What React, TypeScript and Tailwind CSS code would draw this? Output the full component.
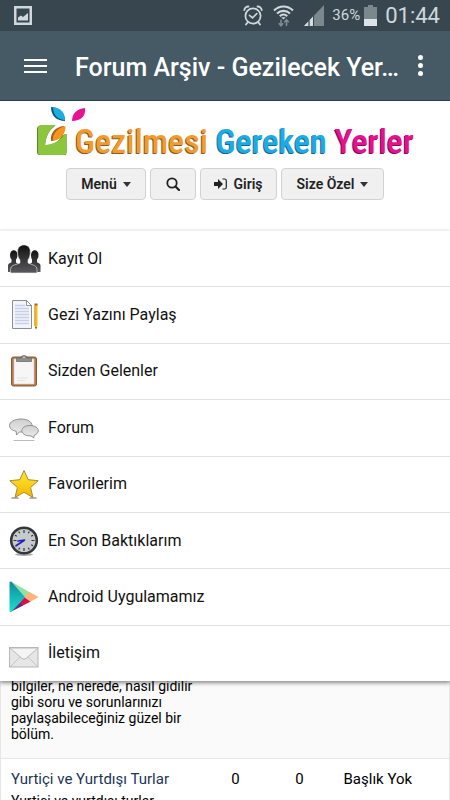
import React from "react";

function PictureIcon() {
  return (
    <svg width="18" height="19" viewBox="0 0 18 19" aria-hidden="true">
      <path d="M0 0h18v19H0z M2.500 2.500v14h13v-14z" fill="#cfd8dc" fillRule="evenodd" />
      <path d="M4 14.500v-3l3-2 2 1.500 5-4v7.500z" fill="#cfd8dc" />
    </svg>
  );
}

function AlarmIcon() {
  return (
    <svg width="20" height="21" viewBox="0 0 20 21" fill="none" stroke="#cfd8dc" strokeLinecap="round" aria-hidden="true">
      <circle cx="10" cy="11" r="7.600" strokeWidth="1.700" />
      <path d="M1.300 5.200C1.500 3 3.500 1.400 5.500 1.500M18.700 5.200C18.500 3 16.500 1.400 14.500 1.500" strokeWidth="1.800" />
      <path d="M4.500 17.500L3 19.500M15.500 17.500l1.500 2" strokeWidth="1.800" />
      <path d="M6.500 10.300l3 2.600 4.300-4.300" strokeWidth="1.600" />
    </svg>
  );
}

function WifiIcon() {
  return (
    <svg width="21" height="22" viewBox="0 0 21 22" fill="none" aria-hidden="true">
      <g stroke="#cfd8dc" strokeWidth="2.100">
        <path d="M1 5.600C6.500.2 14.500.2 20 5.600" />
        <path d="M4 8.600c3.800-3.700 9.200-3.700 13 0" />
        <path d="M6.800 11.300c2.200-2.200 5.200-2.200 7.400 0" />
      </g>
      <path d="M8.300 12.300h4.400l-2.200 2.200z" fill="#cfd8dc" />
      <path d="M8 14.500v6M5.800 18.300L8 20.800l2.200-2.500M13.500 21v-6M11.300 17.200l2.200-2.500 2.200 2.500" stroke="#7f8d94" strokeWidth="1.500" />
    </svg>
  );
}

function SignalIcon() {
  return (
    <svg width="20" height="21" viewBox="0 0 20 21" aria-hidden="true">
      <path d="M0 21L20 0v21z" fill="#7b888e" />
      <path d="M0 21L4.500 16.300V21zM5.500 21v-5.800L9 11.500V21z" fill="#d5dde0" />
      <path d="M4.500 16v5h1v-6zM9 11.500V21h1V10.500z" fill="#38474f" />
    </svg>
  );
}

function BatteryIcon() {
  return (
    <svg width="13" height="21" viewBox="0 0 13 21" aria-hidden="true">
      <path d="M4 0h5v2h4v19H0V2h4z" fill="#7b888e" />
      <path d="M0 14h13v7H0z" fill="#dde4e7" />
    </svg>
  );
}

function LogoMark() {
  return (
    <svg width="50" height="50" viewBox="0 0 50 50" className="shrink-0" aria-hidden="true">
      <path d="M3 19h15c-7 5-9 11-10 20 8-1 15-5 17-11h4v20H3q-3 0-3-3V22q0-3 3-3z" fill="#5e7f31" />
      <path d="M4 18h15c-7 4-10 11-11 20 9-1 17-5 19-11h3v18q0 3-3 3H4q-3 0-3-3V21q0-3 3-3z" fill="#8cc63f" />
      <path d="M27 19c1 9-4 14-13 15-1-8 4-14 13-15z" fill="#a65d17" />
      <path d="M28.500 19c0 8-4 13-12.500 15-1-7 4-13 12.500-15z" fill="#f7931e" />
      <path d="M14 0c9 1 14 6 14 14-8 0-14-5-14-14z" fill="#12536f" />
      <path d="M16 0c8 1 12 6 12 13-7 0-12-5-12-13z" fill="#1bace4" />
      <path d="M48 1c1 8-4 13-13 13 0-8 5-12 13-13z" fill="#e6148f" />
    </svg>
  );
}

function PeopleIcon() {
  return (
    <svg width="34" height="32" viewBox="0 0 34 32" aria-hidden="true">
      <defs>
        <linearGradient id="people" x1="0" y1="0" x2="0" y2="1">
          <stop offset="0" stopColor="#111" />
          <stop offset="1" stopColor="#5a5a5e" />
        </linearGradient>
      </defs>
      <g fill="url(#people)">
        <path d="M3 12.500c-.3-7 8-7 7.500 0 0 2-.8 3-1.500 4v3l3 2V29H1v-6.500q0-2 2-2.500l1.500-.7v-2.800q-1.500-1.500-1.500-4z" />
        <path d="M24 12.500c-.3-7 8-7 7.500 0 0 2-.8 3-1.500 4v2.800l1.500.7q2 .5 2 2.500V29H22v-7.500l3-2v-3q-1-1.500-1-4z" />
      </g>
      <path d="M10.500 9C10-.5 24-.5 23.300 9c0 4-1 6-2.300 8v3l6.500 2.500q2.500 1 2.500 4V30H3.500v-3.500q0-3 2.500-4l7-2.500v-3c-1.500-2-2.500-4-2.500-8z" fill="url(#people)" stroke="#eee" strokeWidth=".6" />
    </svg>
  );
}

function NoteIcon() {
  return (
    <svg width="34" height="32" viewBox="0 0 34 32" aria-hidden="true">
      <path d="M5.500 1.500h14l5 5v23h-19z" fill="#f1f4fb" stroke="#8e8e8e" />
      <path d="M19.500 1.500v5h5z" fill="#fff" stroke="#777" strokeWidth=".8" />
      <path d="M8 6.500h10M8 9.500h14M8 12.500h14M8 15.500h14M8 18.500h14M8 21.500h14M8 24.500h14" stroke="#c9cfe4" strokeWidth="1.500" />
      <path d="M27.500 6h3v21L29 30l-1.500-3z" fill="#f4bd22" />
      <path d="M27.500 4.500h3v2h-3z" fill="#a85c38" />
      <path d="M27.800 7v20" stroke="#c98d13" strokeWidth=".7" />
      <path d="M28.200 28h1.600L29 30.500z" fill="#444" />
    </svg>
  );
}

function ClipboardIcon() {
  return (
    <svg width="34" height="32" viewBox="0 0 34 32" aria-hidden="true">
      <rect x="4.500" y="2" width="25" height="29" rx="2" fill="#b9794a" stroke="#8a5a36" />
      <path d="M7 4h20v25H7z" fill="#f6f6f6" stroke="#d4d4d4" strokeWidth=".6" />
      <path d="M10 23h11M10 25.500h8" stroke="#e1e1e1" strokeWidth=".8" />
      <path d="M9.500 6.500V4q0-1 1-1h3.500q0-2.500 3-2.500T20 3h3.500q1 0 1 1v2.500z" fill="#8b908e" stroke="#5e6160" strokeWidth=".7" />
      <circle cx="17" cy="2.300" r=".8" fill="#e6e6e6" />
    </svg>
  );
}

function ChatIcon() {
  return (
    <svg width="34" height="32" viewBox="0 0 34 32" aria-hidden="true">
      <defs>
        <linearGradient id="chat" x1="0" y1="0" x2="0" y2="1">
          <stop offset="0" stopColor="#cfcfcf" />
          <stop offset="1" stopColor="#ececec" />
        </linearGradient>
      </defs>
      <g fill="url(#chat)" stroke="#868686" strokeWidth=".9">
        <path d="M14 7c6.500 0 11 3 11 6.500S20.500 20 14 20l-1.500-.1L9.500 23l-.3-3.700C5 18.500 2.500 16.300 2.500 13.500 2.500 10 7.500 7 14 7z" />
        <path d="M23 13.500c4.700 0 8.300 2.300 8.300 5.200 0 2-1.600 3.700-4.100 4.600l-.4 2.600-2.800-2H23c-4.700 0-8.200-2.300-8.200-5.200s3.500-5.200 8.200-5.200z" />
      </g>
      <path d="M7 28.500h20" stroke="#bbb" strokeWidth="1" strokeLinecap="round" />
    </svg>
  );
}

function StarIcon() {
  return (
    <svg width="34" height="32" viewBox="0 0 34 32" aria-hidden="true">
      <defs>
        <linearGradient id="star" x1="0" y1="0" x2="0" y2="1">
          <stop offset="0" stopColor="#ffea32" />
          <stop offset="1" stopColor="#f2b705" />
        </linearGradient>
      </defs>
      <path d="M5 30h6M23 30h6" stroke="#999" strokeWidth="1.500" strokeLinecap="round" />
      <path d="M17 2.500l4.200 9.200 10 1-7.600 6.800 2.300 9.900L17 24.300l-8.900 5.100 2.300-9.900-7.600-6.800 10-1z" fill="url(#star)" stroke="#a88a2a" strokeLinejoin="round" />
    </svg>
  );
}

function ClockIcon() {
  return (
    <svg width="34" height="32" viewBox="0 0 34 32" aria-hidden="true">
      <ellipse cx="17" cy="29.500" rx="9" ry="1.500" fill="#aaa" />
      <circle cx="17" cy="15.500" r="12.800" fill="#c6cacc" stroke="#34373a" strokeWidth="2.600" />
      <path d="M17 5v3M17 23v3M6.500 15.500h3M24.500 15.500h3M11.700 6.500l1 1.800M22.300 6.500l-1 1.800M8 10.300l1.800 1M26 10.300l-1.800 1M26 20.700l-1.800-1M22.300 24.500l-1-1.800M11.700 24.500l1-1.800" stroke="#333" strokeWidth="1.200" />
      <path d="M17 15.500L9 20.800M17.500 15l-6.500 1" stroke="#2222b8" strokeWidth="1.700" strokeLinecap="round" />
    </svg>
  );
}

function PlayStoreIcon() {
  return (
    <svg width="34" height="32" viewBox="0 0 34 32" aria-hidden="true">
      <defs>
        <linearGradient id="play" x1="0" y1="0" x2="0" y2="1">
          <stop offset="0" stopColor="#1089a4" />
          <stop offset="1" stopColor="#17e3c9" />
        </linearGradient>
      </defs>
      <path d="M4 .5l19 11-5 6z" fill="#8fe3a0" />
      <path d="M3 31l14.500-15 6.300 4.500z" fill="#d0104f" />
      <path d="M3 31l9-9.500 4 3z" fill="#5b2a91" />
      <path d="M22.500 11L31.500 16l-8 4.800L17 16z" fill="#ffb37a" />
      <path d="M2.500 2q0-2 2-1.200L18 16.200 4.500 30.800q-2 1-2-1z" fill="url(#play)" />
    </svg>
  );
}

function EnvelopeIcon() {
  return (
    <svg width="34" height="32" viewBox="0 0 34 32" aria-hidden="true">
      <rect x="2.500" y="10.500" width="28.500" height="19.500" fill="#e6e6e6" stroke="#b5b5b5" />
      <path d="M3 30l11-11M31 30L20 19" stroke="#c5c5c5" />
      <path d="M3 11l12 10.500q2 1.500 4 0L31 11z" fill="#f4f4f4" stroke="#b9b9b9" />
    </svg>
  );
}

function Caret() {
  return <span className="h-0 w-0 border-x-4 border-t-[5px] border-x-transparent border-t-[#333]" aria-hidden="true" />;
}

const menuItems = [
  { label: "Kayıt Ol", Icon: PeopleIcon },
  { label: "Gezi Yazını Paylaş", Icon: NoteIcon },
  { label: "Sizden Gelenler", Icon: ClipboardIcon },
  { label: "Forum", Icon: ChatIcon },
  { label: "Favorilerim", Icon: StarIcon },
  { label: "En Son Baktıklarım", Icon: ClockIcon },
  { label: "Android Uygulamamız", Icon: PlayStoreIcon },
  { label: "İletişim", Icon: EnvelopeIcon },
];

const toolButton =
  "flex h-8 items-center justify-center rounded border border-[#d2d2d2] bg-[#f0f0f0] text-sm font-semibold text-[#222]";

export default function App() {
  return (
    <div className="flex h-screen flex-col overflow-hidden bg-white font-['Roboto','Noto_Sans',sans-serif] text-black">
      <div className="flex h-[31px] shrink-0 items-center justify-between bg-[#38474f] pr-[10px] pl-[14px] text-[#cfd8dc]">
        <PictureIcon />
        <div className="flex items-center">
          <AlarmIcon />
          <span className="ml-[10px]"><WifiIcon /></span>
          <span className="ml-[10px]"><SignalIcon /></span>
          <span className="ml-2 text-[15px] leading-none">36%</span>
          <span className="ml-1"><BatteryIcon /></span>
          <span className="ml-2 text-[22px] leading-none">01:44</span>
        </div>
      </div>

      <header className="flex h-[70px] shrink-0 items-center border-b border-[#2b3b50] bg-[#455a64] pr-5 pl-6 text-white">
        <button type="button" aria-label="Menü" className="flex w-[23px] flex-col gap-1">
          <span className="h-[2px] bg-white" />
          <span className="h-[2px] bg-white" />
          <span className="h-[2px] bg-white" />
        </button>
        <h1 className="ml-7 flex-1 pt-1 text-[25px] leading-8 font-medium whitespace-nowrap">Forum Arşiv - Gezilecek Yer…</h1>
        <button type="button" aria-label="Seçenekler" className="flex w-5 flex-col items-center gap-[3px]">
          <span className="h-[5px] w-[5px] rounded-full bg-white" />
          <span className="h-[5px] w-[5px] rounded-full bg-white" />
          <span className="h-[5px] w-[5px] rounded-full bg-white" />
        </button>
      </header>

      <div className="flex h-[129px] shrink-0 flex-col items-center">
        <a href="#" className="flex h-[67px] w-[376px] items-start pt-[6px]">
          <LogoMark />
          <span className="-ml-3 flex-1 pt-4 text-[34px] leading-[36px] font-medium whitespace-nowrap font-['Roboto_Condensed','Liberation_Sans_Narrow','Roboto',sans-serif]">
            <span className="text-[#f39a2d] [text-shadow:-1px_1px_0_#8d5a26]">Gezilmesi</span>{" "}
            <span className="text-[#1cabe2] [text-shadow:-1px_1px_0_#14688c]">Gereken</span>{" "}
            <span className="text-[#e5128e] [text-shadow:-1px_1px_0_#850b55]">Yerler</span>
          </span>
        </a>
        <div className="flex gap-1">
          <button type="button" className={`${toolButton} w-20 gap-[6px]`}>Menü <Caret /></button>
          <button type="button" aria-label="Ara" className={`${toolButton} w-[46px]`}>
            <svg width="14" height="14" viewBox="0 0 14 14" fill="none" stroke="#222" aria-hidden="true">
              <circle cx="6" cy="6" r="4.700" strokeWidth="1.800" />
              <path d="M9.500 9.500l3.500 3.500" strokeWidth="2.200" strokeLinecap="round" />
            </svg>
          </button>
          <button type="button" className={`${toolButton} w-[77px] gap-[6px]`}>
            <svg width="13" height="12" viewBox="0 0 13 12" aria-hidden="true">
              <path d="M0 4h4V1l5 5-5 5V8H0z" fill="#222" />
              <path d="M8.500 1H10.500Q12.300 1 12.300 2.800V9.200Q12.300 11 10.500 11H8.500" fill="none" stroke="#222" strokeWidth="1.200" />
            </svg>
            Giriş
          </button>
          <button type="button" className={`${toolButton} w-[103px] gap-[6px]`}>Size Özel <Caret /></button>
        </div>
      </div>

      <nav className="relative z-10 h-[451px] shrink-0 bg-white shadow-[0_2px_4px_rgba(0,0,0,0.45)]">
        <ul className="grid h-full grid-rows-8">
          {menuItems.map(({ label, Icon }) => (
            <li key={label} className="border-t border-[#e2e2e2] first:border-[#f0f0f0]">
              <a href="#" className="flex h-full items-center gap-[7px] pl-[7px] text-base text-[#111]">
                <Icon />
                <span>{label}</span>
              </a>
            </li>
          ))}
        </ul>
      </nav>

      <table className="-mt-1 w-full shrink-0 border-x border-[#e6e6e6] text-[15px] leading-4">
        <tbody>
          <tr className="border-b border-[#e6e6e6] bg-[#fafafa]">
            <td className="w-[203px] px-[10px] pt-px pb-4 text-sm leading-4">
              bilgiler, ne nerede, nasıl gidilir gibi soru ve sorunlarınızı paylaşabileceğiniz güzel bir bölüm.
            </td>
            <td className="w-16" />
            <td className="w-16" />
            <td />
          </tr>
          <tr className="align-top">
            <td className="px-[10px] pt-3">
              <a href="#" className="mb-[6px] block text-[#1c3558]">Yurtiçi ve Yurtdışı Turlar</a>
              <p className="text-sm leading-4">Yurtiçi ve yurtdışı turlar</p>
            </td>
            <td className="pt-3 text-center">0</td>
            <td className="pt-3 text-center">0</td>
            <td className="pt-3 pl-3">Başlık Yok</td>
          </tr>
        </tbody>
      </table>
    </div>
  );
}
